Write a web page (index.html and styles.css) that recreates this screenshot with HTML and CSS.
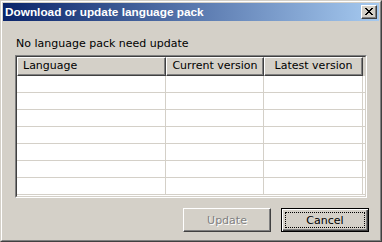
FILE: index.html
```html
<!DOCTYPE html>
<html lang="en">
<head>
  <meta charset="UTF-8" />
  <title>Download or update language pack</title>
  <link rel="stylesheet" href="styles.css">
</head>
<body>
  <div class="window">
    <div class="frame">
      <div class="titlebar">
        <span class="title">Download or update language pack</span>
        <button class="close" aria-label="Close">
          <svg width="8" height="7" viewBox="0 0 8 7" shape-rendering="crispEdges">
            <path d="M0 0h2v1h-2zM6 0h2v1h-2zM1 1h2v1h-2zM5 1h2v1h-2zM2 2h4v1h-4zM3 3h2v1h-2zM2 4h4v1h-4zM1 5h2v1h-2zM5 5h2v1h-2zM0 6h2v1h-2zM6 6h2v1h-2z" fill="#000"/>
          </svg>
        </button>
      </div>

      <div class="client">
        <p class="message">No language pack need update</p>

        <div class="listview">
          <div class="header">
            <div class="col col-lang">Language</div>
            <div class="col col-cur">Current version</div>
            <div class="col col-latest">Latest version</div>
            <div class="col col-rest"></div>
          </div>
          <div class="rows">
            <div class="row"><span></span><span></span><span></span></div>
            <div class="row"><span></span><span></span><span></span></div>
            <div class="row"><span></span><span></span><span></span></div>
            <div class="row"><span></span><span></span><span></span></div>
            <div class="row"><span></span><span></span><span></span></div>
            <div class="row"><span></span><span></span><span></span></div>
            <div class="row"><span></span><span></span><span></span></div>
          </div>
        </div>

        <div class="buttons">
          <button class="btn" disabled>Update</button>
          <button class="btn default"><span class="focus">Cancel</span></button>
        </div>
      </div>
    </div>
  </div>
</body>
</html>
```

FILE: styles.css
```css
* {
  margin: 0;
  padding: 0;
  box-sizing: border-box;
}

body {
  width: 382px;
  height: 242px;
  overflow: hidden;
  background: #d4d0c8;
  font-family: 'DejaVu Sans', sans-serif;
  font-size: 11px;
  color: #000;
}

.window {
  width: 382px;
  height: 242px;
  border: 1px solid;
  border-color: #d4d0c8 #404040 #404040 #d4d0c8;
  background: #d4d0c8;
}

.frame {
  height: 100%;
  border: 1px solid;
  border-color: #fff #808080 #808080 #fff;
  padding: 1px;
  display: flex;
  flex-direction: column;
}

.titlebar {
  height: 18px;
  flex: none;
  display: flex;
  align-items: center;
  justify-content: space-between;
  padding: 0 2px;
  background: linear-gradient(to right, #0a246a, #a6caf0);
}

.title {
  color: #fff;
  font-family: 'Liberation Sans', sans-serif;
  font-weight: bold;
  font-size: 11.8px;
  white-space: nowrap;
}

.close {
  width: 16px;
  height: 14px;
  display: flex;
  align-items: center;
  justify-content: center;
  background: #d4d0c8;
  border: 1px solid;
  border-color: #fff #404040 #404040 #fff;
  box-shadow: inset -1px -1px #808080;
  padding-bottom: 1px;
}

.client {
  flex: 1;
  display: flex;
  flex-direction: column;
  padding: 16px 11px 0 12px;
}

.message {
  line-height: 13px;
  margin-left: 1px;
  white-space: nowrap;
}

/* list view */
.listview {
  margin-top: 5px;
  width: 352px;
  height: 143px;
  border: 1px solid;
  border-color: #808080 #fff #fff #808080;
  background: #fff;
  overflow: hidden;
  position: relative;
}

.listview::before {
  content: "";
  position: absolute;
  inset: 0;
  border: 1px solid;
  border-color: #404040 #d4d0c8 #d4d0c8 #404040;
  pointer-events: none;
  z-index: 2;
}

.header {
  display: flex;
  height: 20px;
  padding: 1px 0 0 1px;
  background: #d4d0c8;
}

.col {
  height: 19px;
  line-height: 16px;
  white-space: nowrap;
  border: 1px solid;
  border-color: #fff #404040 #404040 #fff;
  box-shadow: inset -1px -1px #808080;
  text-align: center;
}

.col-lang {
  width: 149px;
  text-align: left;
  padding-left: 5px;
}

.col-cur {
  width: 98px;
}

.col-latest {
  width: 99px;
}

.col-rest {
  flex: 1;
  border: none;
  box-shadow: none;
}

.rows {
  padding-left: 1px;
}

.row {
  display: flex;
  height: 17px;
  border-bottom: 1px solid #d4d0c8;
}

.row span {
  border-right: 1px solid #d4d0c8;
}

.row span:nth-child(1) { width: 149px; }
.row span:nth-child(2) { width: 98px; }
.row span:nth-child(3) { width: 99px; }

/* buttons */
.buttons {
  margin-top: 10px;
  display: flex;
  justify-content: flex-end;
  gap: 10px;
  margin-right: -1px;
}

.btn {
  width: 88px;
  height: 24px;
  font-family: 'DejaVu Sans', sans-serif;
  font-size: 11px;
  color: #000;
  background: #d4d0c8;
  border: 1px solid;
  border-color: #fff #404040 #404040 #fff;
  box-shadow: inset -1px -1px #808080;
  display: flex;
  align-items: center;
  justify-content: center;
}

.btn:disabled {
  color: #808080;
  text-shadow: 1px 1px #fff;
}

.btn.default {
  border: 1px solid #000;
  box-shadow: inset 1px 1px #fff, inset -1px -1px #404040, inset -2px -2px #808080;
  padding: 3px;
}

.focus {
  display: flex;
  align-items: center;
  justify-content: center;
  width: 100%;
  height: 100%;
  border: 1px dotted #000;
}
```
